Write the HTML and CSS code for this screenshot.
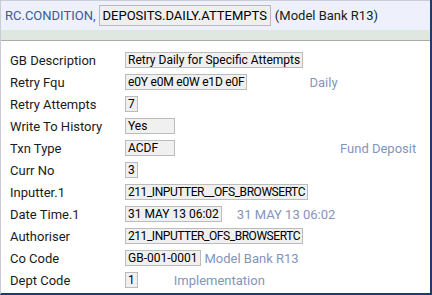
FILE: index.html
```html
<!DOCTYPE html>
<html lang="en">
<head>
    <meta charset="UTF-8">
    <meta name="viewport" content="width=device-width, initial-scale=1.0">
    <link rel="stylesheet" href="styles.css">
    <title>RC.CONDITION</title>
</head>
<body>
    <div id="frame">
        <div id="header">
            <span class="app">RC.CONDITION,</span>
            <span class="recId">DEPOSITS.DAILY.ATTEMPTS</span>
            <span class="company">(Model Bank R13)</span>
        </div>
        <div id="band"></div>
        <div id="fields">
            <div class="row"><span class="label">GB Description</span><span class="val">Retry Daily for Specific Attempts</span></div>
            <div class="row"><span class="label">Retry Fqu</span><span class="val tight">e0Y e0M e0W e1D e0F</span><span class="enri daily">Daily</span></div>
            <div class="row"><span class="label">Retry Attempts</span><span class="val">7</span></div>
            <div class="row"><span class="label">Write To History</span><span class="val w48">Yes</span></div>
            <div class="row"><span class="label">Txn Type</span><span class="val w48">ACDF</span><span class="enri fund">Fund Deposit</span></div>
            <div class="row"><span class="label">Curr No</span><span class="val">3</span></div>
            <div class="row"><span class="label">Inputter.1</span><span class="val tighter">211_INPUTTER__OFS_BROWSERTC</span></div>
            <div class="row"><span class="label">Date Time.1</span><span class="val">31 MAY 13 06:02</span><span class="enri stamp">31 MAY 13 06:02</span></div>
            <div class="row"><span class="label">Authoriser</span><span class="val tighter">211_INPUTTER_OFS_BROWSERTC</span></div>
            <div class="row"><span class="label">Co Code</span><span class="val">GB-001-0001</span><span class="enri comp">Model Bank R13</span></div>
            <div class="row"><span class="label">Dept Code</span><span class="val">1</span><span class="enri dept">Implementation</span></div>
        </div>
    </div>
</body>
</html>
```

FILE: styles.css
```css
html, body{ margin: 0; padding: 0; background: white; }
body{ font-family: Roboto, "Liberation Sans", sans-serif; }
#frame{ width: 432px; height: 295px; box-sizing: border-box; border-left: 1px solid #c9ccd4; border-right: 2px solid #1d3b6c; border-bottom: 2px solid #1d3b6c; overflow: hidden; }
#header{ height: 30px; box-sizing: border-box; background: #eef1fb; border-top: 1px solid #c9ccd4; display: flex; align-items: center; padding-left: 4px; font-size: 13px; }
.app{ color: #3d5a98; }
.recId{ margin-left: 3px; padding: 2px 3px; background: #efefef; border: 1px solid #b9b9b9; color: black; }
.company{ margin-left: 4px; color: #1a1a1a; }
#band{ height: 10px; background: #dfe7e1; border-bottom: 1px solid #a9aca9; }
#fields{ padding: 8px 0 0 9px; }
.row{ display: flex; align-items: center; height: 22px; }
.label{ width: 115px; font-size: 13px; color: #1a1a1a; }
.val{ font-size: 12px; line-height: 14px; padding: 0 2px; background: #f0f0f0; border: 1px solid #bcbcbc; color: black; white-space: nowrap; }
.tight{ letter-spacing: -0.2px; }
.tighter{ letter-spacing: -0.45px; }
.w48{ width: 44px; }
.enri{ font-size: 13px; color: #8494bd; }
.daily{ margin-left: 62px; }
.fund{ margin-left: 165px; }
.stamp{ margin-left: 15px; }
.comp{ margin-left: 4px; }
.dept{ margin-left: 36px; }
```
